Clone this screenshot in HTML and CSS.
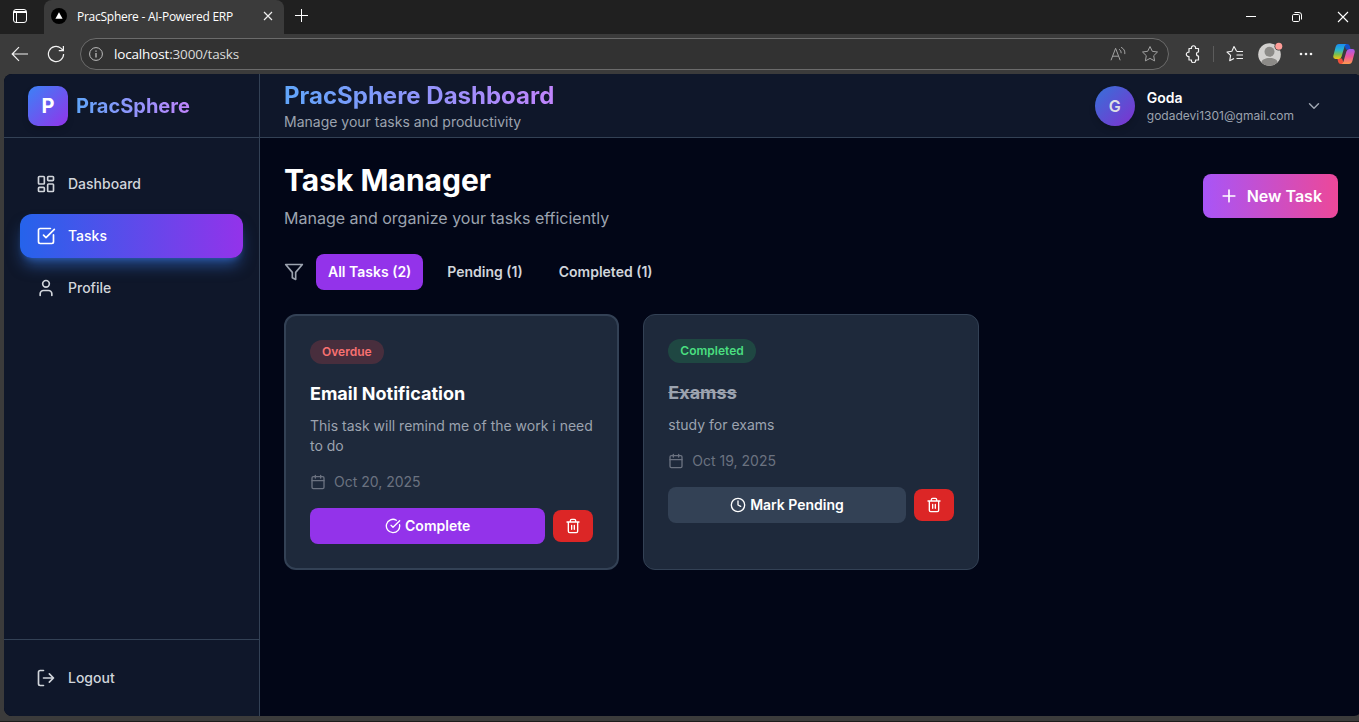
FILE: index.html
```html
<!DOCTYPE html>
<html lang="en">
<head>
<meta charset="utf-8">
<title>PracSphere - AI-Powered ERP</title>
<link rel="stylesheet" href="styles.css">
</head>
<body>
<div class="browser">
  <div class="tabbar">
    <div class="tab-menu">
      <svg width="16" height="16" viewBox="0 0 16 16" fill="none" stroke="#fff"><rect x="1.5" y="1.5" width="13" height="13" rx="2.5"/><path d="M2 3.5h12M2 4.500h12M4.500 5v9" /></svg>
    </div>
    <div class="tab">
      <svg class="favicon" width="16" height="16" viewBox="0 0 16 16"><circle cx="8" cy="8" r="8" fill="#000"/><path d="M8 4.2 11.6 10.8H4.4Z" fill="#fff"/></svg>
      <span class="tab-title">PracSphere - AI-Powered ERP</span>
      <svg width="10" height="10" viewBox="0 0 10 10" fill="none" stroke="#eee" stroke-width="1.2"><path d="m1 1 8 8M9 1 1 9"/></svg>
    </div>
    <svg class="new-tab" width="14" height="14" viewBox="0 0 14 14" fill="none" stroke="#fff"><path d="M6.5 0v13M0 6.5h13"/></svg>
    <div class="window-buttons">
      <svg width="12" height="12" viewBox="0 0 12 12" fill="none" stroke="#fff"><path d="M1 5.5h10"/></svg>
      <svg width="12" height="12" viewBox="0 0 12 12" fill="none" stroke="#fff"><rect x="1.5" y="3.5" width="7" height="7" rx="1.2"/><path d="M3.5 1.5H8a2.5 2.5 0 0 1 2.5 2.5v4.5"/></svg>
      <svg width="12" height="12" viewBox="0 0 12 12" fill="none" stroke="#fff" stroke-width="1.1"><path d="m1 1 10 10M11 1 1 11"/></svg>
    </div>
  </div>
  <div class="toolbar">
    <svg class="back" width="18" height="16" viewBox="0 0 18 16" fill="none" stroke="#f2f2f2" stroke-width="1.2"><path d="M17 8H1.5M8 1.2 1.2 8 8 14.8"/></svg>
    <svg class="reload" width="18" height="18" viewBox="0 0 18 18" fill="none" stroke="#f2f2f2" stroke-width="1.2"><path d="M16.6 9A7.6 7.6 0 1 1 13.8 3.1L16.3 5.5M16.4 1v4.7h-4.6"/></svg>
    <div class="address">
      <svg width="14" height="14" viewBox="0 0 14 14" fill="none" stroke="#bdbdbd"><circle cx="7" cy="7" r="6.4"/><path d="M7 6v4.5M7 3.6v1.2" stroke-width="1.3"/></svg>
      <span class="url"><b>localhost</b>:3000/tasks</span>
      <svg class="read" width="16" height="16" viewBox="0 0 16 16" fill="none" stroke="#a2a2a2"><path d="m1 14.3 4.6-12 4.6 12M2.7 10.2h5.8M9 3.2a4 4 0 0 1 2.2 4M11 1.3a6.6 6.6 0 0 1 3.8 6.800"/></svg>
      <svg width="18" height="18" viewBox="0 0 18 18" fill="none" stroke="#a2a2a2" stroke-linejoin="round"><path d="m9 1.5 2.3 4.8 5.2.7-3.8 3.7.9 5.2L9 13.4l-4.600 2.500.9-5.200L1.500 7l5.200-.7Z"/></svg>
    </div>
    <svg class="puzzle" width="16" height="18" viewBox="0 0 16 18" fill="none" stroke="#f2f2f2" stroke-width="1.200" stroke-linejoin="round"><path d="M4 3.500H6.500a2.100 2.100 0 1 1 4 0H13.500V7A2 2 0 0 0 13.500 11V15H10.500a2.100 2.100 0 1 1-4 0H4V11.500A2.200 2.200 0 1 1 4 7.200Z"/></svg>
    <span class="divider"></span>
    <svg class="favs" width="18" height="18" viewBox="0 0 18 18" fill="none" stroke="#f2f2f2" stroke-width="1.1" stroke-linejoin="round"><path d="M10.5 6 8 1.500 5.900 6.200 1 7l3.600 3.400-.9 5.300L8 13.400M10.500 6.500H17M10.500 10H17M10.500 13.500H17"/></svg>
    <svg class="person" width="25" height="25" viewBox="0 0 25 25"><defs><clipPath id="face"><circle cx="11.5" cy="13.5" r="11.3"/></clipPath></defs><circle cx="11.5" cy="13.5" r="11.3" fill="#d2d0ce"/><g clip-path="url(#face)" fill="#8c8a87"><circle cx="11.5" cy="10.8" r="5"/><path d="M3.5 25v-3.5c0-6 16-6 16 0V25Z"/></g><circle cx="20.8" cy="5.3" r="4.3" fill="#3b3b3b"/><circle cx="20.8" cy="5.3" r="3.5" fill="#ff9d98"/></svg>
    <svg class="dots" width="14" height="4" viewBox="0 0 14 4" fill="#f2f2f2"><circle cx="2" cy="2" r="1.3"/><circle cx="7" cy="2" r="1.3"/><circle cx="12" cy="2" r="1.3"/></svg>
    <svg class="copilot" width="22" height="20" viewBox="0 0 22 20">
      <defs>
        <linearGradient id="cpa" x1="0" y1="0" x2="0" y2="1"><stop offset="0" stop-color="#1a8cf0"/><stop offset=".4" stop-color="#28b5cf"/><stop offset=".7" stop-color="#7fc04a"/><stop offset="1" stop-color="#f5c313"/></linearGradient>
        <linearGradient id="cpb" x1="0" y1="0" x2="0" y2="1"><stop offset="0" stop-color="#a35cf0"/><stop offset=".5" stop-color="#ee559b"/><stop offset="1" stop-color="#ff9a4d"/></linearGradient>
      </defs>
      <path d="M11 0h3.2q2 0 2.6 2l.9 3.4H13Z" fill="#1450c8"/>
      <path d="M11 20H7.800q-2 0-2.600-2L4.300 14.600H9Z" fill="#f0513c"/>
      <path d="M6 0h7.500q-1.300.3-2 2.500L8.600 12.400q-.8 2.600-3 2.600H2.500Q-.4 15 .4 11.500L2.600 3Q3.400 0 6 0Z" fill="url(#cpa)"/>
      <path d="M16 20H8.500q1.300-.3 2-2.500l2.900-9.900q.8-2.600 3-2.600h3.100q2.900 0 2.100 3.500L19.400 17Q18.600 20 16 20Z" fill="url(#cpb)"/>
    </svg>
  </div>

  <div class="page">
    <aside class="sidebar">
      <div class="brand"><span class="logo">P</span><span class="brand-name">PracSphere</span></div>
      <nav class="nav">
        <a class="nav-item"><svg class="icon" width="20" height="20" viewBox="0 0 24 24"><rect width="7" height="9" x="3" y="3" rx="1"/><rect width="7" height="5" x="14" y="3" rx="1"/><rect width="7" height="9" x="14" y="12" rx="1"/><rect width="7" height="5" x="3" y="16" rx="1"/></svg><span>Dashboard</span></a>
        <a class="nav-item active"><svg class="icon" width="20" height="20" viewBox="0 0 24 24"><path d="M21 10.656V19a2 2 0 0 1-2 2H5a2 2 0 0 1-2-2V5a2 2 0 0 1 2-2h12.344"/><path d="m9 11 3 3L22 4"/></svg><span>Tasks</span></a>
        <a class="nav-item"><svg class="icon" width="20" height="20" viewBox="0 0 24 24"><path d="M19 21v-2a4 4 0 0 0-4-4H9a4 4 0 0 0-4 4v2"/><circle cx="12" cy="7" r="4"/></svg><span>Profile</span></a>
      </nav>
      <div class="logout">
        <a class="nav-item"><svg class="icon" width="20" height="20" viewBox="0 0 24 24"><path d="m16 17 5-5-5-5M21 12H9M9 21H5a2 2 0 0 1-2-2V5a2 2 0 0 1 2-2h4"/></svg><span>Logout</span></a>
      </div>
    </aside>
    <div class="content">
      <header class="header">
        <div>
          <div class="header-title">PracSphere Dashboard</div>
          <div class="header-sub">Manage your tasks and productivity</div>
        </div>
        <div class="account">
          <span class="avatar">G</span>
          <div class="who"><div class="name">Goda</div><div class="email">godadevi1301@gmail.com</div></div>
          <svg class="icon chevron" width="18" height="18" viewBox="0 0 24 24"><path d="m6 9 6 6 6-6"/></svg>
        </div>
      </header>
      <main class="main">
        <div class="heading">
          <div><h1>Task Manager</h1><p class="lead">Manage and organize your tasks efficiently</p></div>
          <button class="new-task"><svg class="icon" width="20" height="20" viewBox="0 0 24 24"><path d="M5 12h14M12 5v14"/></svg>New Task</button>
        </div>
        <div class="filters">
          <svg class="icon" width="20" height="20" viewBox="0 0 24 24"><path d="M22 3H2l8 9.460V19l4 2v-8.540Z"/></svg>
          <button class="filter selected">All Tasks (2)</button>
          <button class="filter">Pending (1)</button>
          <button class="filter">Completed (1)</button>
        </div>
        <div class="cards">
          <article class="card overdue">
            <span class="badge red">Overdue</span>
            <h3>Email Notification</h3>
            <p class="desc">This task will remind me of the work i need to do</p>
            <div class="date"><svg class="icon" width="16" height="16" viewBox="0 0 24 24"><path d="M8 2v4M16 2v4M3 10h18"/><rect width="18" height="18" x="3" y="4" rx="2"/></svg>Oct 20, 2025</div>
            <div class="actions">
              <button class="primary"><svg class="icon" width="16" height="16" viewBox="0 0 24 24"><path d="M21.801 10A10 10 0 1 1 17 3.335"/><path d="m9 11 3 3L22 4"/></svg><span>Complete</span></button>
              <button class="delete"><svg class="icon" width="16" height="16" viewBox="0 0 24 24"><path d="M3 6h18M19 6v14c0 1-1 2-2 2H7c-1 0-2-1-2-2V6M8 6V4c0-1 1-2 2-2h4c1 0 2 1 2 2v2M10 11v6M14 11v6"/></svg></button>
            </div>
          </article>
          <article class="card">
            <span class="badge green">Completed</span>
            <h3 class="done">Examss</h3>
            <p class="desc">study for exams</p>
            <div class="date"><svg class="icon" width="16" height="16" viewBox="0 0 24 24"><path d="M8 2v4M16 2v4M3 10h18"/><rect width="18" height="18" x="3" y="4" rx="2"/></svg>Oct 19, 2025</div>
            <div class="actions">
              <button class="primary muted"><svg class="icon" width="16" height="16" viewBox="0 0 24 24"><circle cx="12" cy="12" r="10"/><path d="M12 6v6l4 2"/></svg><span>Mark Pending</span></button>
              <button class="delete"><svg class="icon" width="16" height="16" viewBox="0 0 24 24"><path d="M3 6h18M19 6v14c0 1-1 2-2 2H7c-1 0-2-1-2-2V6M8 6V4c0-1 1-2 2-2h4c1 0 2 1 2 2v2M10 11v6M14 11v6"/></svg></button>
            </div>
          </article>
        </div>
      </main>
    </div>
  </div>
</div>
</body>
</html>
```
FILE: styles.css
```css
* { box-sizing: border-box; }
body { margin: 0; overflow: hidden; background: #3b3b3b; font-family: Inter, "Liberation Sans", sans-serif; color: #fff; }
h1, h3, p { margin: 0; }
svg { display: block; flex: none; }
button { border: 0; padding: 0; background: none; color: inherit; font: inherit; }
.browser { height: 722px; overflow: hidden; border-bottom: 1px solid #1c1c1c; }

.tabbar { display: flex; height: 34px; background: #202020; align-items: center; font-family: "Open Sans", "Noto Sans", sans-serif; }
.tab-menu { width: 44px; height: 34px; padding: 8px 0 0 12px; }
.tab { display: flex; align-items: center; width: 240px; height: 34px; padding: 0 11px 2px 7px; background: #3b3b3b; border-radius: 8px 8px 0 0; }
.tab-title { flex: 1; margin-left: 10px; font-size: 12px; letter-spacing: -0.26px; white-space: nowrap; }
.new-tab { margin: -2px 0 0 11px; }
.window-buttons { display: flex; gap: 34px; margin-left: auto; padding-right: 10px; }

.toolbar { display: flex; align-items: center; height: 40px; }
.back { margin-left: 11px; }
.reload { margin-left: 18px; }
.address { display: flex; align-items: center; width: 1089px; height: 32px; margin-left: 15px; padding: 0 9px 0 8px; border: 1px solid #6b6b6b; border-radius: 16px; background: #323232; }
.url { flex: 1; margin-left: 11px; font: 13.5px "Open Sans", "Noto Sans", sans-serif; letter-spacing: -0.16px; color: #dadada; }
.url b { font-weight: 400; color: #fff; }
.read { margin-right: 15px; }
.puzzle { margin-left: 16px; }
.divider { width: 1px; height: 16px; margin-left: 12px; background: #5c5c5c; }
.favs { margin-left: 12px; }
.person { margin: -2px 0 0 14px; }
.dots { margin-left: 16px; }
.copilot { margin-left: 20px; }

.page { display: flex; width: 1358px; height: 642px; margin-left: 4px; overflow: hidden; border-radius: 8px; background: #020617; }
.icon { fill: none; stroke: currentColor; stroke-width: 2; stroke-linecap: round; stroke-linejoin: round; }

.sidebar { display: flex; flex-direction: column; flex: none; width: 256px; border-right: 1px solid #334155; background: #0f172a; }
.brand { display: flex; align-items: center; gap: 8px; height: 64px; padding: 0 24px; border-bottom: 1px solid #334155; }
.logo { display: flex; align-items: center; justify-content: center; width: 40px; height: 40px; border-radius: 10px; background: linear-gradient(135deg, #3b82f6, #9333ea); box-shadow: 0 4px 6px rgba(0, 0, 0, .15); font-size: 20px; font-weight: 700; }
.brand-name, .header-title { background: linear-gradient(90deg, #60a5fa, #c084fc); background-clip: text; -webkit-background-clip: text; color: transparent; }
.brand-name { font-size: 20px; line-height: 28px; font-weight: 700; }
.nav { display: flex; flex: 1; flex-direction: column; gap: 8px; padding: 24px 16px; }
.nav-item { display: flex; align-items: center; gap: 12px; height: 44px; padding: 0 16px; border-radius: 12px; color: #d1d5db; font-size: 14px; line-height: 20px; font-weight: 500; }
.active { background: linear-gradient(90deg, #2563eb, #9333ea); box-shadow: 0 10px 15px -3px rgba(59, 130, 246, .5), 0 4px 6px -4px rgba(59, 130, 246, .5); color: #fff; }
.logout { padding: 16px; border-top: 1px solid #334155; }

.content { flex: 1; min-width: 0; }
.header { display: flex; align-items: center; justify-content: space-between; height: 64px; padding: 0 40px 0 24px; border-bottom: 1px solid #334155; background: #0f172a; }
.header-title { width: max-content; font-size: 24px; line-height: 32px; font-weight: 700; }
.header-sub { font-size: 14px; line-height: 20px; color: #9ca3af; }
.account { display: flex; align-items: center; gap: 12px; }
.avatar { display: flex; align-items: center; justify-content: center; width: 40px; height: 40px; border-radius: 50%; background: linear-gradient(135deg, #3572d9, #8030cf); box-shadow: 0 4px 6px rgba(0, 0, 0, .15); color: #dddfe6; font-size: 16px; font-weight: 600; }
.name { font-size: 14px; line-height: 20px; font-weight: 600; }
.email { font-size: 12px; line-height: 16px; color: #9ca3af; }
.chevron { margin: 0 -1px; color: #9ca3af; }

.main { padding: 24px; }
.heading { display: flex; align-items: center; justify-content: space-between; }
h1 { font-size: 30px; line-height: 36px; font-weight: 700; }
.lead { margin-top: 8px; font-size: 16px; line-height: 24px; color: #9ca3af; }
.new-task { display: flex; align-items: center; gap: 8px; height: 44px; padding: 0 16px; border-radius: 8px; background: linear-gradient(90deg, #a855f7, #ec4899); font-size: 16px; font-weight: 600; }
.filters { display: flex; align-items: center; gap: 12px; margin-top: 24px; color: #9ca3af; }
.filter { height: 36px; padding: 0 12px; border-radius: 8px; color: #d1d5db; font-size: 14px; line-height: 20px; font-weight: 600; }
.selected { background: #9333ea; color: #fff; }

.cards { display: grid; grid-template-columns: repeat(3, 1fr); gap: 24px; margin-top: 24px; }
.card { padding: 24px; border: 1px solid #334155; border-radius: 12px; background: #1e293b; }
.overdue { border-width: 2px; }
.badge { display: block; width: max-content; padding: 4px 12px; border-radius: 12px; font-size: 12px; line-height: 16px; font-weight: 600; }
.red { background: rgba(239, 68, 68, .2); color: #f87171; }
.green { background: rgba(34, 197, 94, .2); color: #4ade80; }
h3 { margin-top: 16px; font-size: 18px; line-height: 28px; font-weight: 700; }
.done { color: #9ca3af; text-decoration: line-through; }
.desc { margin-top: 8px; font-size: 14px; line-height: 20px; color: #9ca3af; }
.date { display: flex; align-items: center; gap: 8px; margin-top: 16px; font-size: 14px; line-height: 20px; color: #6b7280; }
.actions { display: flex; align-items: center; gap: 8px; margin-top: 16px; }
.primary { display: flex; flex: 1; align-items: center; justify-content: center; gap: 4px; height: 36px; border-radius: 8px; background: #9333ea; font-size: 14px; line-height: 20px; font-weight: 600; }
.muted { background: #334155; }
.delete { display: flex; align-items: center; justify-content: center; width: 40px; height: 32px; border-radius: 8px; background: #dc2626; }
```
